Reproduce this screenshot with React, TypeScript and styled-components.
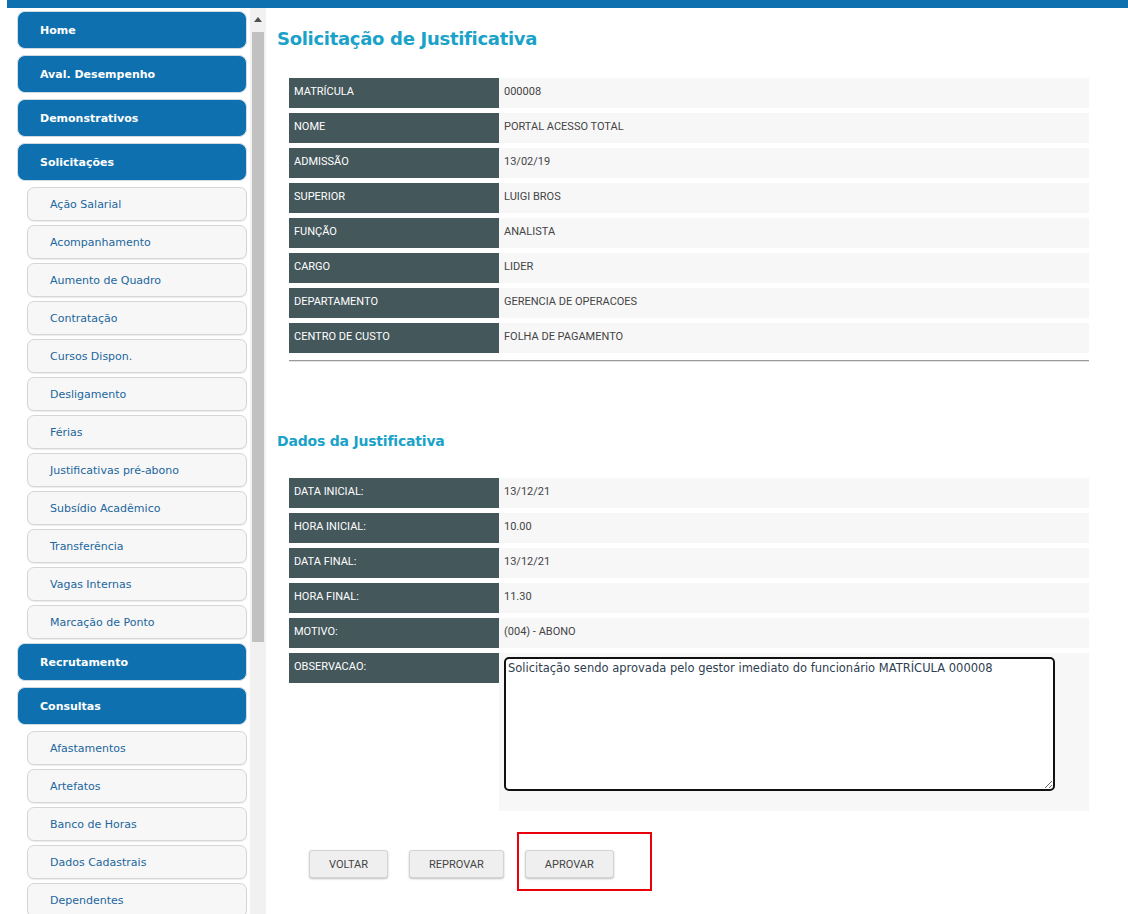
import styled, { createGlobalStyle } from "styled-components";

const GlobalStyle = createGlobalStyle`
    html, body {
        margin: 0;
        padding: 0;
        background: #ffffff;
    }
    body {
        font-family: "DejaVu Sans", Verdana, sans-serif;
    }
`;

type MenuEntry = { label: string; children?: string[] };

const menu: MenuEntry[] = [
    { label: "Home" },
    { label: "Aval. Desempenho" },
    { label: "Demonstrativos" },
    {
        label: "Solicitações",
        children: [
            "Ação Salarial",
            "Acompanhamento",
            "Aumento de Quadro",
            "Contratação",
            "Cursos Dispon.",
            "Desligamento",
            "Férias",
            "Justificativas pré-abono",
            "Subsídio Acadêmico",
            "Transferência",
            "Vagas Internas",
            "Marcação de Ponto",
        ],
    },
    { label: "Recrutamento" },
    {
        label: "Consultas",
        children: ["Afastamentos", "Artefatos", "Banco de Horas", "Dados Cadastrais", "Dependentes"],
    },
];

const employee = [
    ["MATRÍCULA", "000008"],
    ["NOME", "PORTAL ACESSO TOTAL"],
    ["ADMISSÃO", "13/02/19"],
    ["SUPERIOR", "LUIGI BROS"],
    ["FUNÇÃO", "ANALISTA"],
    ["CARGO", "LIDER"],
    ["DEPARTAMENTO", "GERENCIA DE OPERACOES"],
    ["CENTRO DE CUSTO", "FOLHA DE PAGAMENTO"],
];

const justification = [
    ["DATA INICIAL:", "13/12/21"],
    ["HORA INICIAL:", "10.00"],
    ["DATA FINAL:", "13/12/21"],
    ["HORA FINAL:", "11.30"],
    ["MOTIVO:", "(004) - ABONO"],
];

const App = () => {
    return (
        <Page>
            <GlobalStyle />
            <TopBar />
            <Body>
                <Sidebar>
                    {menu.map((item) => (
                        <MenuGroup key={item.label} $open={!!item.children}>
                            <MenuItem>{item.label}</MenuItem>
                            {item.children?.map((child) => (
                                <SubItem key={child}>{child}</SubItem>
                            ))}
                        </MenuGroup>
                    ))}
                </Sidebar>
                <ScrollTrack>
                    <ScrollArrow>
                        <svg width="8" height="5" viewBox="0 0 8 5">
                            <path d="M0 5 L4 0 L8 5 Z" fill="#505050" />
                        </svg>
                    </ScrollArrow>
                    <ScrollThumb />
                </ScrollTrack>
                <Main>
                    <Title>Solicitação de Justificativa</Title>
                    <InfoTable>
                        {employee.map(([label, value]) => (
                            <InfoRow key={label}>
                                <Label>{label}</Label>
                                <Value>{value}</Value>
                            </InfoRow>
                        ))}
                    </InfoTable>
                    <Divider />
                    <Subtitle>Dados da Justificativa</Subtitle>
                    <InfoTable>
                        {justification.map(([label, value]) => (
                            <InfoRow key={label}>
                                <Label>{label}</Label>
                                <Value>{value}</Value>
                            </InfoRow>
                        ))}
                        <InfoRow>
                            <Label>OBSERVACAO:</Label>
                            <TextCell>
                                <Note
                                    defaultValue="Solicitação sendo aprovada pelo gestor imediato do funcionário MATRÍCULA 000008"
                                />
                            </TextCell>
                        </InfoRow>
                    </InfoTable>
                    <ButtonRow>
                        <ActionButton>VOLTAR</ActionButton>
                        <ActionButton>REPROVAR</ActionButton>
                        <Highlight>
                            <ActionButton>APROVAR</ActionButton>
                        </Highlight>
                    </ButtonRow>
                </Main>
            </Body>
        </Page>
    );
};

export default App;

const Page = styled.div`
    width: 1128px;
    height: 914px;
    overflow: hidden;
    display: flex;
    flex-direction: column;
`;

const TopBar = styled.div`
    height: 8px;
    margin-left: 7px;
    background-color: #0e70ae;
    flex-shrink: 0;
`;

const Body = styled.div`
    display: flex;
    flex: 1;
    min-height: 0;
`;

const Sidebar = styled.nav`
    width: 230px;
    margin: 0 3px 0 17px;
    padding-top: 3px;
    display: flex;
    flex-direction: column;
    gap: 6px;
`;

const MenuGroup = styled.div<{ $open?: boolean }>`
    display: flex;
    flex-direction: column;
    align-items: flex-end;
    gap: 4px;
    margin-bottom: ${(p) => (p.$open ? "-2px" : "0")};
`;

const MenuItem = styled.div`
    box-sizing: border-box;
    width: 230px;
    height: 38px;
    padding-left: 22px;
    display: flex;
    align-items: center;
    background-color: #0e70ae;
    border: 1px solid #d2dbe2;
    border-radius: 8px;
    color: #ffffff;
    font-size: 11px;
    font-weight: bold;

    &:not(:last-child) {
        margin-bottom: 2px;
    }
`;

const SubItem = styled.div`
    box-sizing: border-box;
    width: 220px;
    height: 34px;
    padding-left: 22px;
    display: flex;
    align-items: center;
    background-color: #f7f7f7;
    border: 1px solid #d6d6d6;
    border-radius: 7px;
    box-shadow: 0 1px 1px rgba(0, 0, 0, 0.08);
    color: #21669d;
    font-size: 11px;
`;

const ScrollTrack = styled.div`
    width: 16px;
    flex-shrink: 0;
    background-color: #f1f1f1;
    display: flex;
    flex-direction: column;
    align-items: center;
`;

const ScrollArrow = styled.div`
    height: 22px;
    display: flex;
    align-items: center;
    justify-content: center;
`;

const ScrollThumb = styled.div`
    width: 12px;
    height: 610px;
    margin-top: 2px;
    background-color: #c1c1c1;
`;

const Main = styled.main`
    flex: 1;
    padding-left: 11px;
    display: flex;
    flex-direction: column;
`;

const Title = styled.h1`
    margin: 19px 0 0;
    height: 24px;
    line-height: 24px;
    font-size: 18px;
    letter-spacing: -0.3px;
    font-weight: bold;
    color: #1aa2c8;
`;

const Subtitle = styled.h2`
    margin: 70px 0 0;
    height: 20px;
    line-height: 20px;
    font-size: 14px;
    letter-spacing: -0.2px;
    font-weight: bold;
    color: #1aa2c8;
`;

const InfoTable = styled.div`
    width: 800px;
    margin: 27px 0 0 12px;
    display: flex;
    flex-direction: column;
    gap: 5px;
`;

const InfoRow = styled.div`
    display: grid;
    grid-template-columns: 210px 1fr;
    align-items: start;
    font-family: Roboto, "Liberation Sans", sans-serif;
    font-size: 11px;
`;

const Label = styled.div`
    box-sizing: border-box;
    height: 30px;
    padding: 0 0 3px 5px;
    display: flex;
    align-items: center;
    background-color: #44575b;
    color: #ffffff;
`;

const Value = styled.div`
    box-sizing: border-box;
    height: 30px;
    padding: 0 0 3px 5px;
    display: flex;
    align-items: center;
    background-color: #f7f7f7;
    color: #444444;
`;

const TextCell = styled.div`
    box-sizing: border-box;
    height: 158px;
    padding: 4px 0 0 5px;
    background-color: #f7f7f7;
`;

const Note = styled.textarea`
    box-sizing: border-box;
    display: block;
    width: 551px;
    height: 134px;
    padding: 2px;
    border: 2px solid #111111;
    border-radius: 5px;
    resize: both;
    background: #ffffff;
    font-family: "DejaVu Sans", Verdana, sans-serif;
    font-size: 11.5px;
    color: #2f4050;
    outline: none;
`;

const Divider = styled.div`
    width: 800px;
    margin: 7px 0 0 12px;
    height: 1px;
    background-color: #9a9a9a;
    box-shadow: 0 1px 0 #e2e2e2;
`;

const ButtonRow = styled.div`
    display: flex;
    align-items: flex-start;
    gap: 21px;
    margin-top: 39px;
    padding-left: 32px;
`;

const Highlight = styled.div`
    margin: -18px 0 0 -8px;
    padding: 16px 36px 11px 6px;
    border: 2px solid #e8000b;
`;

const ActionButton = styled.button`
    height: 28px;
    padding: 0 19px;
    background-color: #efefef;
    border: 1px solid #d4d4d4;
    border-radius: 3px;
    box-shadow: 0 1px 2px rgba(0, 0, 0, 0.25);
    font-family: Roboto, "Liberation Sans", sans-serif;
    font-size: 11px;
    color: #444444;
    cursor: pointer;
`;
